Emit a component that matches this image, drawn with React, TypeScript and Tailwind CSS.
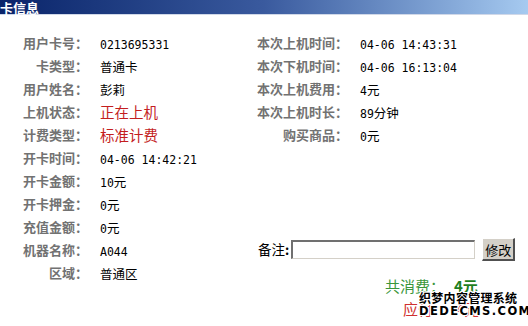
import React from "react";

const cjk = { fontFamily: '"Noto Sans CJK SC", "Noto Sans", sans-serif' };

function V({ t, red }: { t: string; red?: boolean }) {
  const parts = t.split(/([\x00-\x7f]+)/).filter((p) => p.length > 0);
  return (
    <span className={red ? "text-[14.5px] text-[#c41e1e]" : "text-[12.5px] text-black"} style={cjk}>
      {parts.map((p, i) =>
        /^[\x00-\x7f]+$/.test(p) ? (
          <span key={i} className="text-[11.5px] whitespace-pre" style={{ fontFamily: '"DejaVu Sans Mono", monospace' }}>
            {p}
          </span>
        ) : (
          <span key={i}>{p}</span>
        )
      )}
    </span>
  );
}

function L({ t, w }: { t: string; w: string }) {
  return (
    <div className={`${w} shrink-0 text-right text-[13px] font-bold text-[#727272] leading-none`} style={cjk}>
      {t}
    </div>
  );
}

type Row = { l: string; v: string; red?: boolean; rl?: string; rv?: string };

const rows: Row[] = [
  { l: "用户卡号：", v: "0213695331", rl: "本次上机时间：", rv: "04-06 14:43:31" },
  { l: "卡类型：", v: "普通卡", rl: "本次下机时间：", rv: "04-06 16:13:04" },
  { l: "用户姓名：", v: "彭莉", rl: "本次上机费用：", rv: "4元" },
  { l: "上机状态：", v: "正在上机", red: true, rl: "本次上机时长：", rv: "89分钟" },
  { l: "计费类型：", v: "标准计费", red: true, rl: "购买商品：", rv: "0元" },
  { l: "开卡时间：", v: "04-06 14:42:21" },
  { l: "开卡金额：", v: "10元" },
  { l: "开卡押金：", v: "0元" },
  { l: "充值金额：", v: "0元" },
];

export default function App() {
  return (
    <div className="relative w-[528px] h-[326px] bg-white overflow-hidden" style={cjk}>
      <div className="h-[15px] flex items-center bg-gradient-to-r from-[#0a246a] via-[#3a5a9e] to-[#a6caf0] border-b border-[#d0d8e8]">
        <span className="text-[13px] font-bold text-white leading-none">卡信息</span>
      </div>
      <div className="mt-[16px] flex flex-col">
        {rows.map((r, i) => (
          <div key={i} className="h-[23px] flex items-center">
            <div className="w-[250px] flex items-center">
              <L t={r.l} w="w-[88px]" />
              <div className="ml-[12px] leading-none">
                <V t={r.v} red={r.red} />
              </div>
            </div>
            {r.rl && (
              <div className="flex items-center">
                <L t={r.rl} w="w-[98px]" />
                <div className="ml-[12px] leading-none">
                  <V t={r.rv || ""} />
                </div>
              </div>
            )}
          </div>
        ))}
        <div className="h-[23px] flex items-center">
          <div className="w-[250px] flex items-center">
            <L t="机器名称：" w="w-[88px]" />
            <div className="ml-[12px] leading-none">
              <V t="A044" />
            </div>
          </div>
          <div className="flex items-center pl-[8px]">
            <span className="text-[13.5px] text-black leading-none">备注</span>
            <span className="text-[13px] font-bold text-black leading-none">:</span>
            <input
              className="ml-[2px] w-[184px] h-[19px] bg-white border-t-2 border-l-2 border-b border-r border-t-[#707070] border-l-[#707070] border-b-[#d4d0c8] border-r-[#d4d0c8] outline-none"
              defaultValue=""
            />
            <button className="ml-[7px] w-[33px] h-[23px] bg-[#d4d0c8] border-t border-l border-t-white border-l-white border-b-2 border-r-2 border-b-[#505050] border-r-[#505050] text-[13px] text-black leading-none flex items-center justify-center">
              修改
            </button>
          </div>
        </div>
        <div className="flex">
          <div className="w-[250px] h-[23px] flex items-center">
            <L t="区域：" w="w-[88px]" />
            <div className="ml-[12px] leading-none">
              <V t="普通区" />
            </div>
          </div>
          <div className="flex flex-col pt-[13px]">
            <div className="h-[23px] flex items-center pl-[135px] text-[15px] text-[#3a963a] leading-none">
              <span>共消费：</span>
              <span className="ml-[9px] font-bold text-[#1f7f1f]">4元</span>
            </div>
            <div className="h-[23px] flex items-center pl-[153px] text-[15px] text-[#d03030] leading-none">
              <span>应付：</span>
              <span className="ml-[8px]">4元</span>
            </div>
          </div>
        </div>
      </div>
      <div
        className="absolute left-[419px] top-[292px] flex flex-col items-start leading-none"
        style={{ textShadow: "1px 0 0 #fff, -1px 0 0 #fff, 0 1px 0 #fff, 0 -1px 0 #fff, 1px 1px 0 #fff, -1px -1px 0 #fff, 1px -1px 0 #fff, -1px 1px 0 #fff" }}
      >
        <span className="text-[12px] font-bold text-black tracking-[0.3px]">织梦内容管理系统</span>
        <span
          className="mt-[2px] text-[11.5px] font-bold text-black tracking-[1.4px]"
          style={{ fontFamily: '"DejaVu Sans", sans-serif' }}
        >
          DEDECMS.COM
        </span>
      </div>
    </div>
  );
}
